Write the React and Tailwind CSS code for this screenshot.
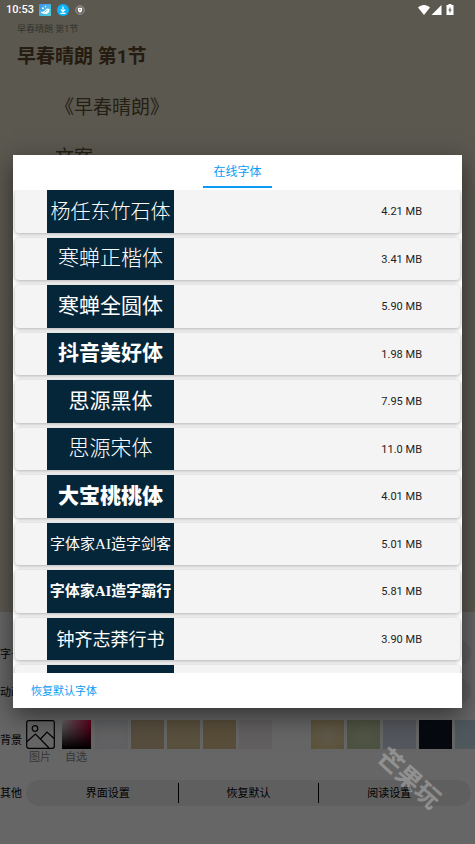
import React from 'react';

const fonts = [
  { name: '杨任东竹石体', size: '4.21 MB', style: 'text-[20px] font-light' },
  { name: '寒蝉正楷体', size: '3.41 MB', style: 'text-[21px] font-light' },
  { name: '寒蝉全圆体', size: '5.90 MB', style: 'text-[21px] font-normal' },
  { name: '抖音美好体', size: '1.98 MB', style: 'text-[21px] font-bold' },
  { name: '思源黑体', size: '7.95 MB', style: 'text-[21px] font-normal' },
  { name: '思源宋体', size: '11.0 MB', style: 'text-[21px] font-light' },
  { name: '大宝桃桃体', size: '4.01 MB', style: 'text-[21px] font-black' },
  { name: '字体家AI造字剑客', size: '5.01 MB', style: "font-['Liberation_Serif','Noto_Sans_CJK_SC',serif] text-[15px] font-normal" },
  { name: '字体家AI造字霸行', size: '5.81 MB', style: "font-['Liberation_Serif','Noto_Sans_CJK_SC',serif] text-[15px] font-bold" },
  { name: '钟齐志莽行书', size: '3.90 MB', style: 'text-[18px] font-normal' },
  { name: '', size: '', style: '' },
];

const swatches = [
  'bg-[radial-gradient(#f8f8f8,#eef0f6)]',
  'bg-[#d8c09c]',
  'bg-[#e2c99c]',
  'bg-[#dfc48e]',
  'bg-[#f3eef0]',
  'bg-transparent',
  'bg-[radial-gradient(#eee0c0,#e6cb8c)]',
  'bg-[radial-gradient(#ccd7b2,#bccc9e)]',
  'bg-[#d5d9ea]',
  'bg-[#111b28]',
  'bg-[#c2dde8]',
];

const StatusBar = () => (
  <div className="absolute inset-x-0 top-0 z-20 flex h-5 items-center justify-between pl-[6px] pr-[21px] text-white">
    <div className="flex items-center gap-[6px]">
      <span className="mr-[-1px] text-[11px] font-medium">10:53</span>
      <svg className="h-3 w-3" viewBox="0 0 12 12">
        <defs>
          <linearGradient id="app" x1="0" y1="0" x2="1" y2="1">
            <stop offset="0" stopColor="#3f8fee" />
            <stop offset="1" stopColor="#4fd8d8" />
          </linearGradient>
        </defs>
        <rect width="12" height="12" rx="1" fill="url(#app)" />
        <path d="M1.500 7.500c1.500.6 2.500.2 3.500-.3L8 4.500l2.500.5c.3 3-1.500 5-4.500 5-2.500 0-4-1-4.500-2.500z" fill="#fff" />
        <path d="M5.500 8.300 8.500 6" stroke="#4bb9e4" strokeWidth=".8" />
        <circle cx="4" cy="4.300" r="1" fill="#fff" />
        <circle cx="6.500" cy="2.500" r=".7" fill="#fff" />
      </svg>
      <svg className="h-3 w-3" viewBox="0 0 12 12">
        <circle cx="6" cy="6" r="6" fill="#08b4fb" />
        <path d="M6 2.500v5M3.800 5.500 6 7.700l2.200-2.200M3.500 9.300h5" fill="none" stroke="#fff" strokeWidth="1.200" />
      </svg>
      <svg className="h-3 w-3" viewBox="0 0 12 12">
        <circle cx="5" cy="6" r="4.200" fill="none" stroke="#a9a7a2" strokeWidth=".9" />
        <path d="M2.800 4 5 3.500 7.200 4v2C7.200 7.500 6 8.300 5 8.800 4 8.300 2.800 7.500 2.800 6z" fill="#fff" />
        <path d="M4.200 5.200h1.600L5 7z" fill="#5b5850" />
      </svg>
    </div>
    <svg className="h-3 w-9" viewBox="0 0 36 12">
      <path d="M0 3.500C3.500 0 8.500 0 12 3.500L6 11z" fill="#fff" />
      <path d="M23.500 1v10H13.500z" fill="#fff" />
      <path d="M30.500 1V0h3v1h2v10h-7V1z" fill="#fff" />
      <path d="M32 3.500v5M30.500 6h3" stroke="#5b5850" />
    </svg>
  </div>
);

const Reader = () => (
  <main className="flex-1 bg-[#e3dcc8] pl-[17px] pt-[21px]">
    <p className="text-[9px] leading-4 text-[#87816f]">早春晴朗 第1节</p>
    <h1 className="mt-[5px] text-[19px] font-bold leading-[30px] text-[#5d472b]">早春晴朗 第1节</h1>
    <div className="mt-[21px] flex flex-col gap-5 indent-[2em] text-[19px] leading-[30px] text-[#5d5030]">
      <p>《早春晴朗》</p>
      <p>文案</p>
    </div>
  </main>
);

const SliderRow = ({ label }) => (
  <div className="flex items-center gap-1 pr-1">
    <span className="w-[22px] shrink-0 whitespace-nowrap pt-1">{label}</span>
    <div className="h-[26px] flex-1 rounded-full bg-[#eeeeee]"></div>
  </div>
);

const Settings = () => (
  <section className="overflow-hidden bg-white pb-[38px] pt-7 text-[11px] leading-4 text-black">
    <div className="flex flex-col gap-3">
      <SliderRow label="字号" />
      <SliderRow label="动画" />
    </div>

    <div className="mt-4 flex">
      <span className="w-[22px] shrink-0 pt-[13px]">背景</span>
      <button className="flex w-9 shrink-0 flex-col items-center text-[#8a8a8a]">
        <svg className="mb-px h-[29px] w-[29px] text-black" viewBox="0 0 29 29" fill="none" stroke="currentColor" strokeWidth="1.200">
          <rect x=".7" y=".7" width="27.600" height="27.600" rx="2" />
          <circle cx="9" cy="8.500" r="2.800" />
          <path d="M1 21.500 9.500 14 23 28M14.500 19l6.500-7 7 6.500" />
        </svg>
        图片
      </button>
      <button className="flex w-9 shrink-0 flex-col items-center text-[#8a8a8a]">
        <span className="mb-px block h-[29px] w-[29px] bg-[linear-gradient(to_top,#000,transparent),linear-gradient(to_right,#fff,#ff0050)]"></span>
        自选
      </button>
      {swatches.map((color, i) => (
        <button key={i} aria-label={`背景 ${i + 1}`} className="flex w-9 shrink-0 items-start pl-px">
          <span className={`block h-[29px] w-[33px] ${color}`}></span>
        </button>
      ))}
    </div>

    <div className="mt-[14px] flex items-center gap-1 pr-1">
      <span className="w-[22px] shrink-0 pt-[2px]">其他</span>
      <div className="flex h-[26px] flex-1 items-center divide-x divide-black rounded-full bg-[#eeeeee] px-3">
        <button className="h-5 flex-1 pt-[2px]">界面设置</button>
        <button className="h-5 flex-1 pt-[2px]">恢复默认</button>
        <button className="h-5 flex-1 pt-[2px]">阅读设置</button>
      </div>
    </div>
  </section>
);

const FontRow = ({ name, size, style }) => (
  <li className="flex h-[43px] shrink-0 items-center justify-between rounded-[4px] bg-[#f4f4f4] pl-8 pr-[38px] shadow-[0_1px_4px_rgba(0,0,0,0.35)] even:h-[42px]">
    <span className={`flex h-full w-[127px] items-center justify-center whitespace-nowrap bg-[#052639] text-white ${style}`}>
      {name}
    </span>
    <span className="pt-[2px] text-[11px] text-[#222222]">{size}</span>
  </li>
);

const FontDialog = () => (
  <div className="absolute inset-0 z-10 flex items-center bg-black/60 px-[13px] pt-[19px]">
    <div role="dialog" aria-label="在线字体" className="flex h-[67%] w-full flex-col bg-white shadow-[0_8px_24px_rgba(0,0,0,0.5)]">
      <div className="flex h-[35px] shrink-0 justify-center">
        <button className="mb-[2px] border-b-2 border-[#0a9bf5] px-[10px] pt-[2px] text-[12px] text-[#0a9bf5]">在线字体</button>
      </div>
      <ul className="flex flex-1 flex-col gap-[5px] overflow-hidden px-[2px]">
        {fonts.map((font, i) => (
          <FontRow key={i} {...font} />
        ))}
      </ul>
      <div className="flex h-[35px] shrink-0 items-center pl-[18px] pt-1">
        <button className="text-[11px] text-[#0a9bf5]">恢复默认字体</button>
      </div>
    </div>
  </div>
);

export default function App() {
  return (
    <div className="relative flex min-h-screen flex-col overflow-hidden font-[Roboto,'Noto_Sans_CJK_SC',sans-serif]">
      <StatusBar />
      <Reader />
      <Settings />
      <FontDialog />
      {/* 水印 */}
      <div className="pointer-events-none absolute bottom-[47px] right-[29px] z-20 rotate-[42deg] text-[25px] font-bold leading-9 text-white/30">
        芒果玩
      </div>
    </div>
  );
}
